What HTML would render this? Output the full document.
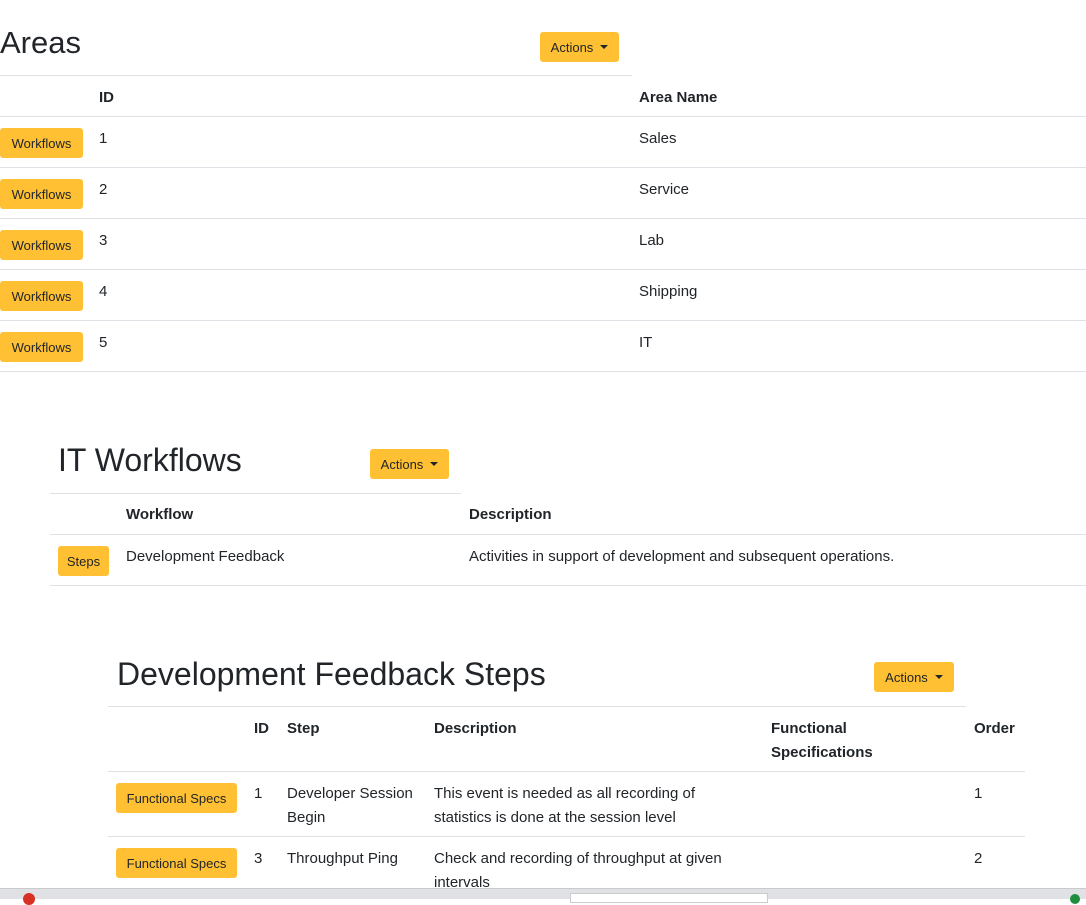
<!DOCTYPE html>
<html><head><style>
body{margin:0;width:1086px;height:898px;position:relative;overflow:hidden;background:#fff;font-family:"Liberation Sans",sans-serif;color:#212529}
.a{position:absolute;white-space:nowrap}
.h{font-size:32px;line-height:36px}
.t{font-size:15px;line-height:24px}
.b{font-weight:bold}
.btn{position:absolute;background:#ffc133;border-radius:3px;font-size:13px;color:#212529;display:flex;align-items:center;justify-content:center;height:30px}
.car{display:inline-block;width:0;height:0;border-left:4px solid transparent;border-right:4px solid transparent;border-top:4px solid #212529;margin-left:7px;vertical-align:middle}
.l{position:absolute;height:1px;background:#dee2e6}
</style></head><body>
<div class="a h" style="left:0;top:25px;font-size:31px">Areas</div>
<div class="btn" style="left:540px;top:32px;width:79px">Actions<span class="car"></span></div>
<div class="l" style="left:0;top:75px;width:632px"></div>
<div class="a t b" style="left:99px;top:86px">ID</div>
<div class="a t b" style="left:639px;top:86px">Area Name</div>
<div class="l" style="left:0;top:116px;width:1086px"></div>

<div class="btn" style="left:0;top:128px;width:83px">Workflows</div>
<div class="a t" style="left:99px;top:127px">1</div><div class="a t" style="left:639px;top:127px">Sales</div>
<div class="l" style="left:0;top:167px;width:1086px"></div>
<div class="btn" style="left:0;top:179px;width:83px">Workflows</div>
<div class="a t" style="left:99px;top:178px">2</div><div class="a t" style="left:639px;top:178px">Service</div>
<div class="l" style="left:0;top:218px;width:1086px"></div>
<div class="btn" style="left:0;top:230px;width:83px">Workflows</div>
<div class="a t" style="left:99px;top:229px">3</div><div class="a t" style="left:639px;top:229px">Lab</div>
<div class="l" style="left:0;top:269px;width:1086px"></div>
<div class="btn" style="left:0;top:281px;width:83px">Workflows</div>
<div class="a t" style="left:99px;top:280px">4</div><div class="a t" style="left:639px;top:280px">Shipping</div>
<div class="l" style="left:0;top:320px;width:1086px"></div>
<div class="btn" style="left:0;top:332px;width:83px">Workflows</div>
<div class="a t" style="left:99px;top:331px">5</div><div class="a t" style="left:639px;top:331px">IT</div>
<div class="l" style="left:0;top:371px;width:1086px"></div>

<div class="a h" style="left:58px;top:442px">IT Workflows</div>
<div class="btn" style="left:370px;top:449px;width:79px">Actions<span class="car"></span></div>
<div class="l" style="left:50px;top:493px;width:411px"></div>
<div class="a t b" style="left:126px;top:503px">Workflow</div>
<div class="a t b" style="left:469px;top:503px">Description</div>
<div class="l" style="left:50px;top:534px;width:1036px"></div>
<div class="btn" style="left:58px;top:546px;width:51px">Steps</div>
<div class="a t" style="left:126px;top:545px">Development Feedback</div>
<div class="a t" style="left:469px;top:545px">Activities in support of development and subsequent operations.</div>
<div class="l" style="left:50px;top:585px;width:1036px"></div>

<div class="a h" style="left:117px;top:656px">Development Feedback Steps</div>
<div class="btn" style="left:874px;top:662px;width:80px">Actions<span class="car"></span></div>
<div class="l" style="left:108px;top:706px;width:858px"></div>
<div class="a t b" style="left:254px;top:717px">ID</div>
<div class="a t b" style="left:287px;top:717px">Step</div>
<div class="a t b" style="left:434px;top:717px">Description</div>
<div class="a t b" style="left:771px;top:717px">Functional<br>Specifications</div>
<div class="a t b" style="left:974px;top:717px">Order</div>
<div class="l" style="left:108px;top:771px;width:917px"></div>
<div class="btn" style="left:116px;top:783px;width:121px">Functional Specs</div>
<div class="a t" style="left:254px;top:782px">1</div>
<div class="a t" style="left:287px;top:782px">Developer Session<br>Begin</div>
<div class="a t" style="left:434px;top:782px">This event is needed as all recording of<br>statistics is done at the session level</div>
<div class="a t" style="left:974px;top:782px">1</div>
<div class="l" style="left:108px;top:836px;width:917px"></div>
<div class="btn" style="left:116px;top:848px;width:121px">Functional Specs</div>
<div class="a t" style="left:254px;top:847px">3</div>
<div class="a t" style="left:287px;top:847px">Throughput Ping</div>
<div class="a t" style="left:434px;top:847px">Check and recording of throughput at given<br>intervals</div>
<div class="a t" style="left:974px;top:847px">2</div>

<div style="position:absolute;left:0;top:888px;width:1086px;height:10px;background:#dfe1e5;border-top:1px solid #c8cacd"></div>
<div style="position:absolute;left:23px;top:893px;width:12px;height:12px;border-radius:50%;background:#d93025"></div>
<div style="position:absolute;left:570px;top:893px;width:196px;height:8px;background:#fff;border:1px solid #ccc"></div>
<div style="position:absolute;left:1070px;top:894px;width:10px;height:10px;border-radius:50%;background:#1e8e3e"></div>
</body></html>
